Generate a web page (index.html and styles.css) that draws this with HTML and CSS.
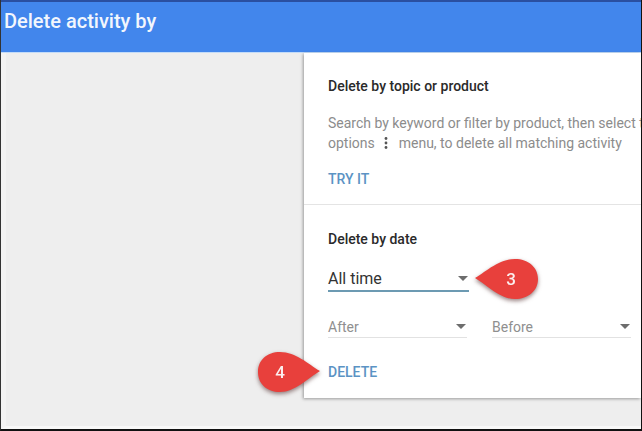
FILE: index.html
```html
<!DOCTYPE html>
<html lang="en">
<head>
<meta charset="utf-8">
<title>Delete activity by</title>
<link rel="stylesheet" href="styles.css">
</head>
<body>
<div class="window">
  <header class="topbar"><h1 class="title">Delete activity by</h1></header>
  <main class="content">
    <div class="card">
      <section class="topic">
        <h2 class="heading">Delete by topic or product</h2>
        <p class="desc">Search by keyword or filter by product, then select the<br>options <svg class="dots" width="6" height="14" viewBox="0 0 6 14"><circle cx="3" cy="2.5" r="1.4"/><circle cx="3" cy="7" r="1.4"/><circle cx="3" cy="11.5" r="1.4"/></svg> menu, to delete all matching activity</p>
        <a class="action try">TRY IT</a>
      </section>
      <section class="date">
        <h2 class="heading">Delete by date</h2>
        <div class="select main-select"><span>All time</span><i class="caret"></i></div>
        <div class="range">
          <div class="select small"><span>After</span><i class="caret"></i></div>
          <div class="select small"><span>Before</span><i class="caret"></i></div>
        </div>
        <a class="action del">DELETE</a>
      </section>
    </div>
  </main>
  <svg class="pin pin3" width="68" height="46" viewBox="0 0 68 46"><path class="pin-shape" d="M2 22 C14 15 26 3 42 3 C55 3 65 11 65 23 C65 35 55 43 42 43 C27 43 14 29 2 22 Z"/><text x="38" y="29" class="pin-num">3</text></svg>
  <svg class="pin pin4" width="68" height="46" viewBox="0 0 68 46"><path class="pin-shape" d="M65 22 C53 15 41 3 25 3 C12 3 3 11 3 23 C3 35 12 43 25 43 C40 43 53 29 65 22 Z"/><text x="25" y="29" class="pin-num">4</text></svg>
</div>
</body>
</html>
```

FILE: styles.css
```css
* { box-sizing: border-box; }
html, body { margin: 0; padding: 0; }
body { width: 642px; height: 431px; overflow: hidden; font-family: Roboto, "Liberation Sans", sans-serif; background: #eee; }
.window { position: relative; width: 642px; height: 431px; display: flex; flex-direction: column; overflow: hidden; border-left: 1px solid #333; border-right: 1px solid #111; border-bottom: 2px solid #111; background: #eee; }
.topbar { height: 53px; flex: none; background: #4286ec; border-top: 2px solid #2a4fa0; border-bottom: 1px solid #c4dcf8; padding: 6px 0 0 3px; }
.title { margin: 0; font-size: 20px; line-height: 26px; font-weight: 500; color: #f2f6fd; }
.content { flex: 1; display: flex; justify-content: flex-end; align-items: flex-start; min-height: 0; border-left: 5px solid #f3f3f3; border-bottom: 3px solid #f8f8f8; }
.card { width: 337px; height: 345px; flex: none; background: #fff; box-shadow: -1px 1px 3px rgba(0,0,0,.35); display: flex; flex-direction: column; overflow: hidden; padding-left: 24px; }
.topic { height: 152px; margin-left: -24px; padding: 25px 0 0 24px; border-bottom: 1px solid #e4e4e4; flex: none; }
.heading { margin: 0; font-size: 14px; line-height: 16px; font-weight: 500; color: #2a2a2a; white-space: nowrap; }
.desc { margin: 19px 0 0; width: 340px; font-size: 14px; line-height: 20px; color: #8c8c8c; white-space: nowrap; }
.dots { fill: #555; vertical-align: -2px; margin: 0 6px 0 5px; }
.action { display: block; font-size: 14px; line-height: 16px; font-weight: 500; color: #5b93c4; }
.try { margin-top: 18px; }
.date { flex: 1; padding-top: 26px; }
.select { display: flex; align-items: center; justify-content: space-between; white-space: nowrap; }
.main-select { width: 141px; height: 29px; margin-top: 16px; padding: 3px 1px 0 0; border-bottom: 2px solid #6c9ab2; font-size: 16px; color: #333; }
.range { display: flex; gap: 25px; margin-top: 24px; }
.small { width: 139px; height: 22px; border-bottom: 1px solid #e2e2e2; font-size: 14px; color: #8f8f8f; padding-right: 1px; }
.caret { width: 0; height: 0; border-left: 5px solid transparent; border-right: 5px solid transparent; border-top: 5px solid #6d6d6d; }
.del { margin-top: 26px; }
.pin { position: absolute; filter: drop-shadow(0 2px 2px rgba(70,30,30,.55)); }
.pin3 { left: 472px; top: 256px; }
.pin4 { left: 254px; top: 349px; }
.pin-shape { fill: #e8403c; }
.pin-num { font-family: Roboto, "Liberation Sans", sans-serif; font-size: 17px; font-weight: 500; fill: #fbeeee; text-anchor: middle; }
```
